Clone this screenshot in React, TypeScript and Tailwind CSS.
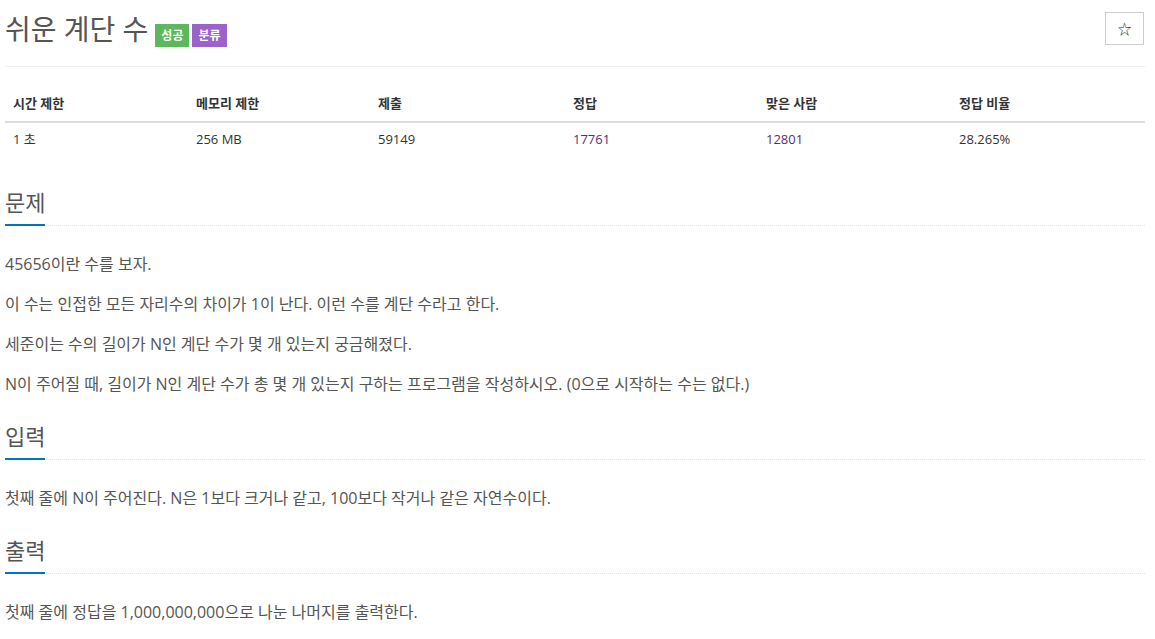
import React from 'react';

const font = { fontFamily: '"Open Sans", "Noto Sans CJK KR", sans-serif' };

const stats = [
  { label: '시간 제한', value: '1 초' },
  { label: '메모리 제한', value: '256 MB' },
  { label: '제출', value: '59149' },
  { label: '정답', value: '17761', link: true },
  { label: '맞은 사람', value: '12801', link: true },
  { label: '정답 비율', value: '28.265%' },
];

function Headline({ title }: { title: string }) {
  return (
    <div className="border-b border-dotted border-[#dfe3ea]">
      <h2 className="inline-block mb-[-1px] pb-[8px] border-b-2 border-[#0076c0] text-[22px] leading-[28px] text-[#555]">
        {title}
      </h2>
    </div>
  );
}

function Section({ title, lines }: { title: string; lines: string[] }) {
  return (
    <section className="mt-[26px]">
      <Headline title={title} />
      <div className="mt-[26px]">
        {lines.map((line) => (
          <p key={line} className="text-[16px] leading-[24px] mb-[16px] text-[#555]">
            {line}
          </p>
        ))}
      </div>
    </section>
  );
}

export default function App() {
  return (
    <div className="bg-white min-h-screen pl-[5px] pr-[10px]" style={font}>
      <div className="flex justify-between items-start pt-[11px] pb-[19px] border-b border-[#eee]">
        <div className="flex items-end">
          <h1 className="text-[28px] leading-[36px] text-[#555] mr-[7px]">쉬운 계단 수</h1>
          <span className="h-[23px] px-[6px] flex items-center bg-[#5cb85c] text-white text-[12px] font-bold mr-[3px]">
            성공
          </span>
          <span className="h-[23px] px-[6px] flex items-center bg-[#9b62cb] text-white text-[12px] font-bold">
            분류
          </span>
        </div>
        <button className="mt-[1px] mr-[1px] w-[39px] h-[33px] border border-[#ccc] flex items-center justify-center text-[14px] text-[#333]">
          ☆
        </button>
      </div>

      <div className="mt-[19px] text-[13px] text-[#333]">
        <div className="grid grid-cols-[183px_182px_195px_193px_193px_1fr] border-b-2 border-[#ddd]">
          {stats.map((s) => (
            <div key={s.label} className="h-[35px] px-[8px] flex items-center font-bold">
              {s.label}
            </div>
          ))}
        </div>
        <div className="grid grid-cols-[183px_182px_195px_193px_193px_1fr]">
          {stats.map((s) => (
            <div
              key={s.label}
              className={`h-[33px] px-[8px] flex items-center ${s.link ? 'text-[#5a2d72]' : ''}`}
            >
              {s.value}
            </div>
          ))}
        </div>
      </div>

      <div className="mt-[32px]">
        <Section
          title="문제"
          lines={[
            '45656이란 수를 보자.',
            '이 수는 인접한 모든 자리수의 차이가 1이 난다. 이런 수를 계단 수라고 한다.',
            '세준이는 수의 길이가 N인 계단 수가 몇 개 있는지 궁금해졌다.',
            'N이 주어질 때, 길이가 N인 계단 수가 총 몇 개 있는지 구하는 프로그램을 작성하시오. (0으로 시작하는 수는 없다.)',
          ]}
        />
        <Section title="입력" lines={['첫째 줄에 N이 주어진다. N은 1보다 크거나 같고, 100보다 작거나 같은 자연수이다.']} />
        <Section title="출력" lines={['첫째 줄에 정답을 1,000,000,000으로 나눈 나머지를 출력한다.']} />
      </div>
    </div>
  );
}
